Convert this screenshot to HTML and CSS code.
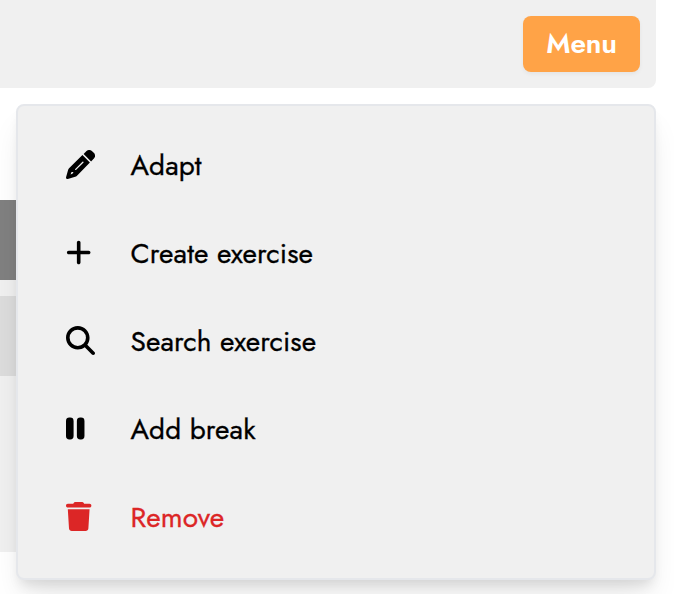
FILE: index.html
```html
<!DOCTYPE html>
<html lang="en">
<head>
    <meta charset="UTF-8">
    <meta name="viewport" content="width=device-width, initial-scale=1.0">
    <title>Exercises</title>
    <link rel="stylesheet" href="styles.css">
</head>
<body>
    <header class="toolbar">
        <button class="menu-button" type="button">Menu</button>
    </header>

    <main class="content">
        <div class="content-head"></div>
        <div class="content-row"></div>
    </main>

    <nav class="menu">
        <a class="menu-item">
            <svg class="icon" viewBox="0 0 512 512"><path fill-rule="evenodd" d="M290 90L422 222L190 458Q178 469 162 474L32 511Q-4 516 1 480L38 350Q43 334 54 322ZM98 388L80 432L112 420L128 402V388ZM164 334L290 208Q300 200 307 207Q314 214 306 224L180 348Q170 356 163 349Q156 342 164 334Z"/><path d="M311 69L362 18Q408-18 457 17L495 55Q532 104 492 152L443 201Z"/></svg>
            <span class="label">Adapt</span>
        </a>
        <a class="menu-item">
            <svg class="icon" viewBox="0 0 512 512"><path d="M256 80c0-17.700-14.300-32-32-32s-32 14.300-32 32v144H48c-17.700 0-32 14.300-32 32s14.300 32 32 32h144v144c0 17.700 14.300 32 32 32s32-14.300 32-32V288h144c17.700 0 32-14.300 32-32s-14.300-32-32-32H256V80z"/></svg>
            <span class="label">Create exercise</span>
        </a>
        <a class="menu-item">
            <svg class="icon" viewBox="0 0 512 512"><path d="M416 208c0 45.900-14.900 88.300-40 122.700l126.600 126.700c12.500 12.500 12.500 32.800 0 45.300s-32.800 12.500-45.300 0L330.700 376c-34.400 25.200-76.800 40-122.700 40C93.100 416 0 322.900 0 208S93.100 0 208 0s208 93.100 208 208zM208 352a144 144 0 1 0 0-288 144 144 0 1 0 0 288z"/></svg>
            <span class="label">Search exercise</span>
        </a>
        <a class="menu-item">
            <svg class="icon" viewBox="0 0 512 512"><rect x="0" y="62" width="134" height="388" rx="60"/><rect x="192" y="62" width="134" height="388" rx="60"/></svg>
            <span class="label">Add break</span>
        </a>
        <a class="menu-item danger">
            <svg class="icon" viewBox="0 0 512 512"><path d="M135.200 17.700L128 32H32C14.300 32 0 46.300 0 64s14.300 32 32 32h384c17.700 0 32-14.300 32-32s-14.300-32-32-32h-96l-7.200-14.300C307.400 6.800 296.300 0 284.200 0H163.800c-12.100 0-23.200 6.800-28.600 17.700zM416 128H32l21.200 339c1.600 25.300 22.600 45 47.900 45h245.800c25.300 0 46.300-19.700 47.900-45L416 128z"/></svg>
            <span class="label">Remove</span>
        </a>
    </nav>
</body>
</html>
```
FILE: styles.css
```css
* {
    box-sizing: border-box;
}
body {
    margin: 0;
    height: 594px;
    overflow: hidden;
    position: relative;
    background: #fff;
    color: #000;
    font-family: Jost, Lato, sans-serif;
    font-size: 28px;
    line-height: 40px;
}
.toolbar {
    display: flex;
    justify-content: flex-end;
    width: 656px;
    height: 88px;
    padding: 16px;
    background: #f0f0f0;
    border-radius: 0 0 8px 0;
}
.menu-button {
    width: 117px;
    height: 56px;
    padding: 0;
    border: 0;
    border-radius: 8px;
    background: #ffa347;
    color: #fff;
    font: inherit;
    font-weight: 600;
    letter-spacing: -0.2px;
    box-shadow: 0 2px 4px rgba(0, 0, 0, 0.05);
}
.content {
    width: 640px;
    height: 352px;
    margin-top: 112px;
    background: #f0f0f0;
}
.content-head {
    height: 80px;
    background: #808080;
}
.content-row {
    height: 80px;
    margin-top: 16px;
    background: #dcdcdc;
}

/* dropdown lies over the content */
.menu {
    position: absolute;
    top: 104px;
    left: 16px;
    width: 640px;
    padding: 16px 0;
    border: 2px solid #e5e7eb;
    border-radius: 8px;
    background: #f0f0f0;
    box-shadow: 0 20px 30px -6px rgba(0, 0, 0, 0.1), 0 8px 12px -4px rgba(0, 0, 0, 0.1);
}
.menu-item {
    display: flex;
    align-items: center;
    height: 88px;
    padding: 0 48px;
}
.icon {
    width: 29px;
    height: 29px;
    margin: 0 35.5px 3px 0;
    fill: currentColor;
}
.label {
    letter-spacing: 0.1px;
    white-space: nowrap;
    -webkit-text-stroke: 0.3px currentColor;
}
.danger {
    color: #dc2626;
}
```
